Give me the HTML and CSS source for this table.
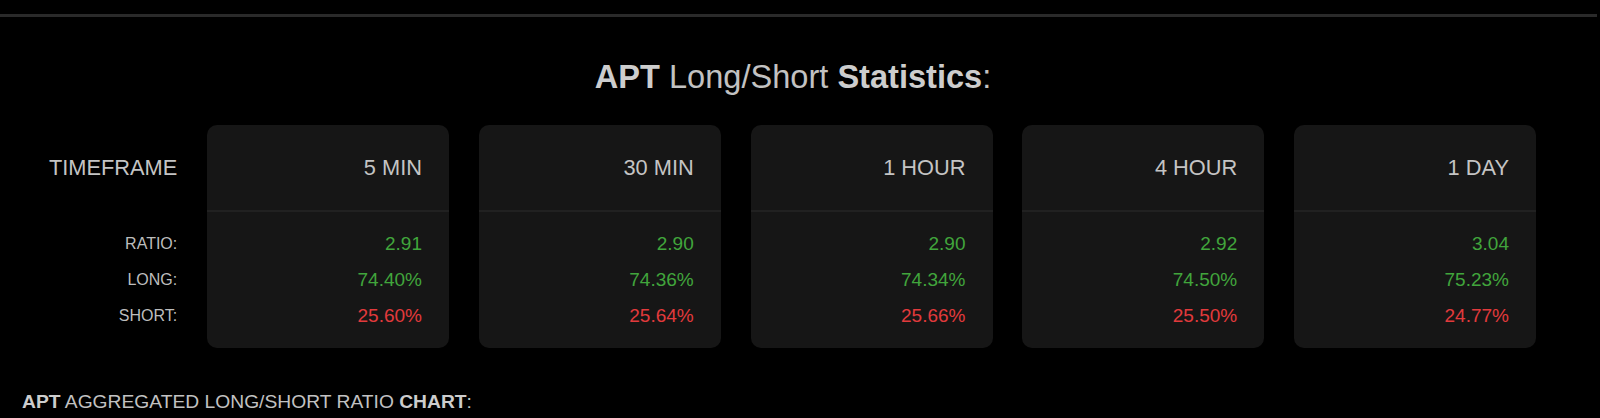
FILE: index.html
```html
<!DOCTYPE html>
<html lang="en">
<head>
<meta charset="utf-8">
<title>APT Long/Short Statistics</title>
<link rel="stylesheet" href="styles.css">
</head>
<body>
<div class="topline"></div>
<h2 class="title"><b>APT</b> Long/Short <b>Statistics</b>:</h2>
<div class="stats">
  <div class="col labels">
    <div class="head">TIMEFRAME</div>
    <div class="body">
      <div class="row">RATIO:</div>
      <div class="row">LONG:</div>
      <div class="row">SHORT:</div>
    </div>
  </div>
  <div class="col card">
    <div class="head">5 MIN</div>
    <div class="body">
      <div class="row up">2.91</div>
      <div class="row up">74.40%</div>
      <div class="row down">25.60%</div>
    </div>
  </div>
  <div class="col card">
    <div class="head">30 MIN</div>
    <div class="body">
      <div class="row up">2.90</div>
      <div class="row up">74.36%</div>
      <div class="row down">25.64%</div>
    </div>
  </div>
  <div class="col card">
    <div class="head">1 HOUR</div>
    <div class="body">
      <div class="row up">2.90</div>
      <div class="row up">74.34%</div>
      <div class="row down">25.66%</div>
    </div>
  </div>
  <div class="col card">
    <div class="head">4 HOUR</div>
    <div class="body">
      <div class="row up">2.92</div>
      <div class="row up">74.50%</div>
      <div class="row down">25.50%</div>
    </div>
  </div>
  <div class="col card">
    <div class="head">1 DAY</div>
    <div class="body">
      <div class="row up">3.04</div>
      <div class="row up">75.23%</div>
      <div class="row down">24.77%</div>
    </div>
  </div>
</div>
<p class="chart-title"><b>APT</b> AGGREGATED LONG/SHORT RATIO <b>CHART</b>:</p>
</body>
</html>
```
FILE: styles.css
```css
html, body {
  margin: 0;
  padding: 0;
  background: #000;
  color: #c4c4c4;
  font-family: "Liberation Sans", Arial, sans-serif;
}

.topline {
  margin: 14px 3px 0 0;
  height: 3px;
  background: #2a2a2a;
}

.title {
  margin: 42px 14px 0 0;
  font-size: 32.6px;
  font-weight: normal;
  line-height: 36px;
  text-align: center;
  color: #c2c2c2;
}

.title b {
  color: #cdcdcd;
}

.stats {
  display: grid;
  grid-template-columns: 177.25px repeat(5, 242px);
  column-gap: 29.75px;
  margin-top: 30px;
}

.col {
  display: flex;
  flex-direction: column;
}

.head {
  height: 85px;
  line-height: 85px;
  font-size: 21.8px;
  border-bottom: 2px solid transparent;
}

.body {
  padding: 14px 0 14px 0;
}

.row {
  line-height: 36px;
  height: 36px;
}

.labels {
  text-align: right;
}

.labels .row {
  font-size: 16px;
  color: #bdbdbd;
}

.card {
  background: #161616;
  border-radius: 10px;
  text-align: right;
}

.card .head {
  padding-right: 27px;
  border-bottom-color: #212121;
}

.card .body {
  padding-right: 27px;
}

.card .row {
  font-size: 19px;
}

.up {
  color: #41a53c;
}

.down {
  color: #e23a3c;
}

.chart-title {
  margin: 43px 0 0 22px;
  font-size: 19.25px;
  line-height: 22px;
  color: #c2c2c2;
}

.chart-title b {
  color: #cdcdcd;
}
```
